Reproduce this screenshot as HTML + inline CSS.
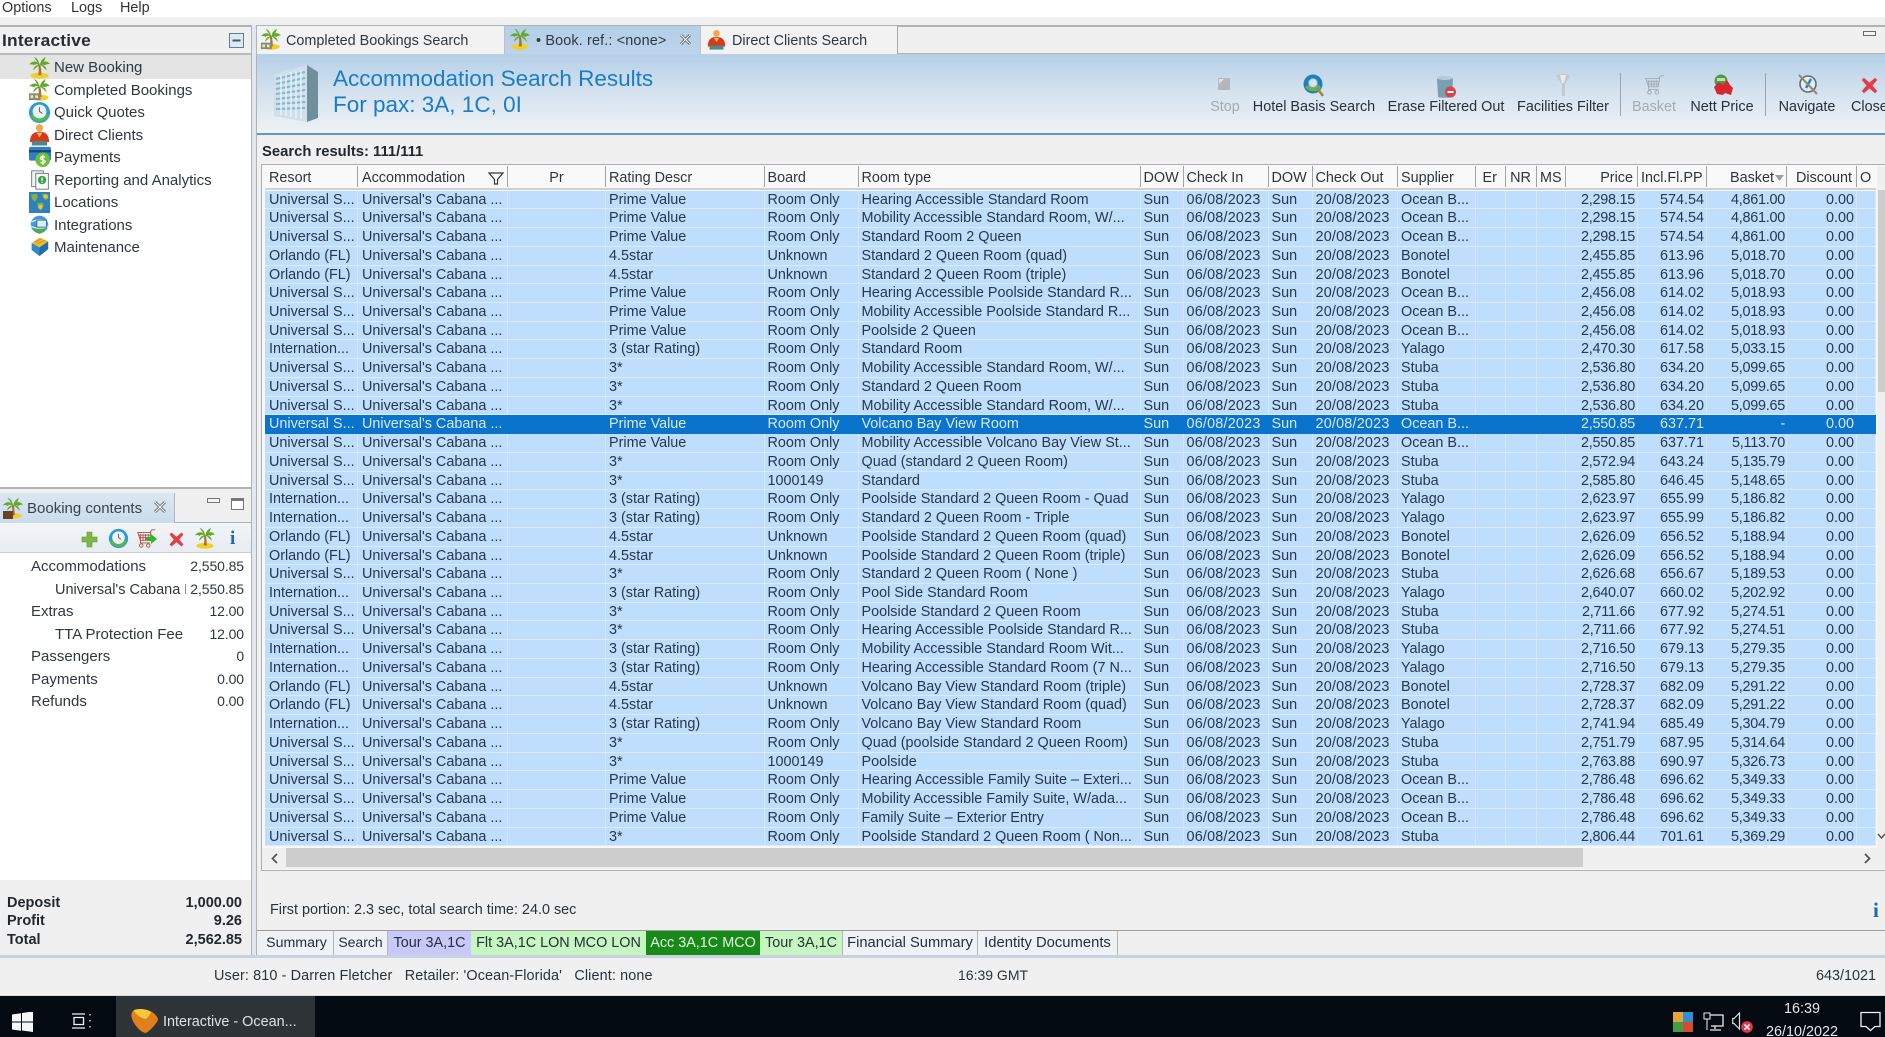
<!DOCTYPE html>
<html lang="en">
<head>
<meta charset="utf-8">
<title>Interactive - Ocean</title>
<style>
*{box-sizing:border-box}
html,body{margin:0;padding:0;width:1885px;height:1037px;overflow:hidden;background:#f0f0f0}
body{font-family:"Liberation Sans",Arial,sans-serif;font-size:14.4px;color:#2a333c}
#app{position:absolute;left:0;top:0;width:1885px;height:1037px;overflow:hidden;filter:blur(.35px)}
.a{position:absolute;white-space:nowrap}
.box{position:absolute}
.ico{position:absolute}
.c{transform:translate(-50%,-50%);line-height:20px}
.v{transform:translateY(calc(-50% + 1px));line-height:20px}
.v0{transform:translateY(-50%);line-height:20px}
.r0{transform:translateY(-50%);line-height:20px;text-align:right}
.nav{font-size:15px;color:#2f3840}
.amt{font-size:14px;color:#2f3840;letter-spacing:-.1px}
.ft{font-weight:bold;font-size:14.500px;color:#23282d}
.grid{position:absolute;left:265px;top:190.6px;width:1611px}
.r,.h{display:grid;grid-template-columns:93px 150px 98px 158.5px 94px 282px 43px 85px 44px 85.5px 77.5px 30.5px 31px 29px 72px 69px 80px 70px 19px}
.r{height:18.74px;line-height:17.7px;background:#bfdefe;border-bottom:1px solid #d9ebfd}
.r i{font-style:normal;padding:1px 4px 0;overflow:hidden;white-space:nowrap;border-right:1px solid #d4e7fc;color:#26384a}
.r i:nth-child(n+4){padding-left:3px}
.r i:nth-child(8),.r i:nth-child(10){letter-spacing:.2px}
.r i:nth-child(n+15),.h i:nth-child(n+15){text-align:right}
.r i:nth-child(n+15){padding-right:2px}
.r i:nth-child(15),.r i:nth-child(17){letter-spacing:-.25px}
.r i:nth-child(17){padding-right:1px}
.r.s{background:#0a73cc;border-bottom-color:#0a73cc}
.r.s i{color:#d6e9fa;border-right-color:#0a73cc}
.h{position:absolute;left:265px;top:166px;width:1611px;height:24px;line-height:25px;background:#f9f9f9;border-bottom:2px solid #d0d0d0}
.h i{font-style:normal;padding:0 4px;white-space:nowrap;overflow:hidden;border-right:1px solid #a3a3a3;color:#2c3640;height:21px}
.h i:nth-child(n+4){padding-left:3px}
.h i.ctr{text-align:center}
.tb{position:absolute;top:931px;height:24px;line-height:24px;text-align:center;border-right:1px solid #b5b5b5;white-space:nowrap;color:#26303a}
.lab{position:absolute;top:107px;transform:translate(-50%,-50%);line-height:20px;white-space:nowrap;color:#27303a}
.dis{color:#a6abb0}
.tab{position:absolute;top:26px;height:28px;line-height:31px;white-space:nowrap;color:#2f3840}
</style>
</head>
<body>
<svg width="0" height="0" style="position:absolute">
<defs>
<symbol id="palm" viewBox="0 0 24 24">
<ellipse cx="12" cy="20.500" rx="9.500" ry="3.200" fill="#f3cf2a"/>
<path d="M10.500 9c1 4 1 8 0 11h3.500c0-4-.4-8-1.200-11z" fill="#a8742e"/>
<path d="M12.500 10C10 5 5 4 1 9c2-.6 4-.4 5 .8C8 8 10 8 12.500 10zM12.500 10c2-5 7-6 10.500-1.500-2-.4-4 0-5 1.300-1.500-1-3.500-1-5.500.2zM12.500 10C11 5 10 2 6 1c2 2 3 5 6.500 9zM12.500 10c0-4 2-7 6-9-1 3-2 6-6 9zM12 9c-3 0-6 2-6.500 6 2-2 4-3.500 6.500-6zM13 9c3 0 6 2 6.500 6-2-2-4-3.500-6.500-6z" fill="#63a82a"/>
</symbol>
<symbol id="cb" viewBox="0 0 24 24">
<use href="#palm"/>
<rect x="1" y="16" width="12" height="7" fill="#8a8a6a"/>
<rect x="2.500" y="18" width="3" height="3" fill="#e6e6d0"/><rect x="7.500" y="18" width="3" height="3" fill="#e6e6d0"/>
</symbol>
<symbol id="clock" viewBox="0 0 24 24">
<circle cx="12" cy="12" r="11" fill="#2a9ad8"/>
<path d="M2 15a11 11 0 0 0 20 0l-4-1a7 7 0 0 1-12 0z" fill="#58b947"/>
<circle cx="12" cy="11" r="7.200" fill="#eef4f6"/>
<path d="M12 6.500V11l3 2" fill="none" stroke="#667" stroke-width="1.200"/>
</symbol>
<symbol id="person" viewBox="0 0 24 24">
<circle cx="12" cy="5" r="3.800" fill="#f0a850"/>
<path d="M2 20c0-7 3-11 10-11s10 4 10 11z" fill="#d9381c"/>
<path d="M9 10l3 5 3-5z" fill="#f3c24a"/>
<rect x="4" y="19" width="16" height="4.500" fill="#4a8a8a"/>
</symbol>
<symbol id="pay" viewBox="0 0 24 24">
<rect x="0" y="1" width="24" height="15" rx="2" fill="#2f7fc4"/>
<rect x="0" y="4.500" width="24" height="2.500" fill="#16497a"/>
<circle cx="15" cy="15" r="8" fill="#6fbf3a"/>
<path d="M17.500 12.500c-2-1.500-5-1-5 .8 0 2.400 5 1.200 5 3.600 0 1.800-3 2.200-5 .7M15 9.500v11" fill="none" stroke="#fff" stroke-width="1.400"/>
</symbol>
<symbol id="rep" viewBox="0 0 24 24">
<rect x="2" y="1" width="14" height="19" fill="#eef2f2" stroke="#607070"/>
<rect x="7" y="4" width="15" height="19" fill="#f7fafa" stroke="#507070"/>
<circle cx="14.500" cy="12" r="5" fill="#3aa04a"/>
<rect x="13.700" y="9" width="1.600" height="4" fill="#fff"/><rect x="13.700" y="14" width="1.600" height="1.400" fill="#fff"/>
</symbol>
<symbol id="loc" viewBox="0 0 24 24">
<rect x="0" y="0" width="24" height="24" fill="#2f80bf"/>
<path d="M2 3l7-1 1 4-3 5-3-2zM15 2l7 1v5l-4 1-2-3zM9 13l6-1 2 3-3 6-3-2z" fill="#86b23c"/>
<circle cx="19" cy="5" r="2.500" fill="#e8c53a"/><circle cx="13" cy="17" r="2.500" fill="#e8c53a"/>
</symbol>
<symbol id="integ" viewBox="0 0 24 24">
<circle cx="12" cy="12" r="10" fill="#3f9ad6"/>
<path d="M3 9c6-3 12-3 18 0M2 14c6 3 14 3 20 0" stroke="#cfe8f7" stroke-width="1.500" fill="none"/>
<rect x="9" y="7" width="11" height="8" fill="#dff0fa" stroke="#2a6a9a"/>
<path d="M4 17l8 6 8-6" fill="#58a83a"/>
</symbol>
<symbol id="maint" viewBox="0 0 24 24">
<path d="M3 8l9-6 10 4-10 7z" fill="#f2b92e"/>
<path d="M3 8v8l9 7v-10z" fill="#2f88c8"/>
<path d="M12 13v10l10-8V6z" fill="#1e6ea8"/>
<path d="M6 7l9-4M9 9l9-4" stroke="#c98e16" stroke-width="1"/>
</symbol>
<symbol id="redx" viewBox="0 0 24 24">
<path d="M5 2l7 6 7-6 3 3-6 7 6 7-3 3-7-6-7 6-3-3 6-7-6-7z" fill="#e23c46" stroke="#c9d2dc" stroke-width=".6"/>
</symbol>
<symbol id="cart" viewBox="0 0 24 24">
<path d="M2 5h15l-1.500 9H5zM5 7v7M8 7v7M11 7v7M14 7v7M3 8h13M4 11h12M16 5l2-3h4" fill="none" stroke="currentColor" stroke-width="1"/>
<path d="M5 14v3h11" fill="none" stroke="currentColor"/>
<circle cx="6" cy="20" r="2" fill="none" stroke="currentColor"/><circle cx="14" cy="20" r="2" fill="none" stroke="currentColor"/>
</symbol>
</defs>
</svg>
<div id="app">

<!-- menu -->
<div class="box" style="left:0;top:0;width:1885px;height:17px;background:#fff"></div>
<div class="a v" style="left:2px;top:7px;color:#333">Options</div>
<div class="a v" style="left:71px;top:7px;color:#333">Logs</div>
<div class="a v" style="left:120px;top:7px;color:#333">Help</div>

<!-- panel frames -->
<div class="box" style="left:0;top:25px;width:1885px;height:2px;background:#b0b3b6"></div>
<div class="box" style="left:251px;top:25px;width:6px;height:933px;background:#e3e8ee;border-left:1px solid #b0b3b6;border-right:1px solid #b0b3b6"></div>

<!-- left top panel -->
<div class="a" style="left:2px;top:41px;font-size:17px;line-height:20px;font-weight:bold;color:#2a2e33;letter-spacing:.2px;transform:translateY(-50%) scaleX(1.02);transform-origin:left">Interactive</div>
<svg class="ico" style="left:229px;top:33px" width="15" height="15"><rect x=".5" y=".5" width="14" height="14" fill="#dfe9f2" stroke="#5d7e9e"/><rect x="3.500" y="6.500" width="8" height="2" fill="#3c5a78"/></svg>
<div class="box" style="left:0;top:53px;width:251px;height:2px;background:#b8babc"></div>
<div class="box" style="left:0;top:55px;width:251px;height:432px;background:#fff"></div>
<div class="box" style="left:0;top:55px;width:251px;height:23.500px;background:#e4e4e4"></div>
<div class="box" style="left:0;top:487px;width:251px;height:6px;background:#f0f0f0;border-top:2px solid #b0b3b6"></div>

<svg class="ico" style="left:28px;top:56px" width="23" height="23"><use href="#palm"/></svg>
<svg class="ico" style="left:28px;top:78px" width="23" height="23"><use href="#cb"/></svg>
<svg class="ico" style="left:28px;top:101px" width="23" height="23"><use href="#clock"/></svg>
<svg class="ico" style="left:28px;top:123px" width="23" height="23"><use href="#person"/></svg>
<svg class="ico" style="left:29px;top:146px" width="22" height="22"><use href="#pay"/></svg>
<svg class="ico" style="left:30px;top:169px" width="20" height="22"><use href="#rep"/></svg>
<svg class="ico" style="left:29px;top:192px" width="21" height="21"><use href="#loc"/></svg>
<svg class="ico" style="left:29px;top:214px" width="21" height="21"><use href="#integ"/></svg>
<svg class="ico" style="left:29px;top:236px" width="21" height="21"><use href="#maint"/></svg>

<div class="a v nav" style="left:54px;top:67px">New Booking</div>
<div class="a v nav" style="left:54px;top:89.500px">Completed Bookings</div>
<div class="a v nav" style="left:54px;top:112px">Quick Quotes</div>
<div class="a v nav" style="left:54px;top:134.500px">Direct Clients</div>
<div class="a v nav" style="left:54px;top:157px">Payments</div>
<div class="a v nav" style="left:54px;top:179.500px">Reporting and Analytics</div>
<div class="a v nav" style="left:54px;top:202px">Locations</div>
<div class="a v nav" style="left:54px;top:224.500px">Integrations</div>
<div class="a v nav" style="left:54px;top:247px">Maintenance</div>

<!-- booking contents -->
<div class="box" style="left:0;top:493px;width:175px;height:30px;background:linear-gradient(#dce7f1,#c9dcee);border-right:1px solid #b0b8c0"></div>
<div class="box" style="left:175px;top:522px;width:76px;height:1px;background:#b0b3b6"></div>
<svg class="ico" style="left:2px;top:497px" width="22" height="22"><use href="#palm"/><rect x="1" y="14" width="10" height="8" fill="#6a4028"/></svg>
<div class="a v nav" style="left:27px;top:508px;color:#39424a">Booking contents</div>
<svg class="ico" style="left:153px;top:500px" width="14" height="14"><path d="M2 2l10 10M12 2L2 12" stroke="#6d7680" stroke-width="3"/><path d="M2 2l10 10M12 2L2 12" stroke="#fff" stroke-width="1"/></svg>
<svg class="ico" style="left:207px;top:497px" width="40" height="16"><rect x=".5" y="1.500" width="12" height="4" fill="#f4f4f4" stroke="#777"/><rect x="24.500" y="1.500" width="12" height="11" fill="#fff" stroke="#777"/><rect x="24" y="1" width="13" height="3" fill="#777"/></svg>

<div class="box" style="left:0;top:523px;width:251px;height:30px;background:linear-gradient(#f3f5f7,#e7ecf1);border-bottom:1px solid #c8ccd0"></div>
<svg class="ico" style="left:81px;top:531px" width="17" height="17"><path d="M6 1h5v5h5v5h-5v5H6v-5H1V6h5z" fill="#7fb648" stroke="#5e9434" stroke-width=".6"/></svg>
<svg class="ico" style="left:108px;top:528px" width="21" height="21"><use href="#clock"/></svg>
<svg class="ico" style="left:136px;top:528px;color:#b04a40" width="21" height="21"><use href="#cart"/><path d="M10 9h5V6l6 5-6 5v-3h-5z" fill="#2fb52f"/></svg>
<svg class="ico" style="left:168px;top:531px" width="17" height="17"><use href="#redx"/></svg>
<svg class="ico" style="left:194px;top:527px" width="22" height="22"><use href="#palm"/></svg>
<div class="a" style="left:230px;top:528px;font:bold 19px/22px 'Liberation Serif',serif;color:#1a6aa6">i</div>

<div class="box" style="left:0;top:553px;width:251px;height:327px;background:#fff"></div>
<div class="a v nav" style="left:31px;top:566px">Accommodations</div>
<div class="a r0 amt" style="right:1641px;top:566px">2,550.85</div>
<div class="a v nav" style="left:55px;top:588.500px;width:131px;overflow:hidden;font-size:14.500px">Universal's Cabana Bay</div>
<div class="a r0 amt" style="right:1641px;top:588.500px">2,550.85</div>
<div class="a v nav" style="left:31px;top:611px">Extras</div>
<div class="a r0 amt" style="right:1641px;top:611px">12.00</div>
<div class="a v nav" style="left:55px;top:633.500px">TTA Protection Fee</div>
<div class="a r0 amt" style="right:1641px;top:633.500px">12.00</div>
<div class="a v nav" style="left:31px;top:656px">Passengers</div>
<div class="a r0 amt" style="right:1641px;top:656px">0</div>
<div class="a v nav" style="left:31px;top:678.500px">Payments</div>
<div class="a r0 amt" style="right:1641px;top:678.500px">0.00</div>
<div class="a v nav" style="left:31px;top:701px">Refunds</div>
<div class="a r0 amt" style="right:1641px;top:701px">0.00</div>

<div class="a v0 ft" style="left:7px;top:903px">Deposit</div>
<div class="a r0 ft" style="right:1643px;top:903px">1,000.00</div>
<div class="a v0 ft" style="left:7px;top:921px">Profit</div>
<div class="a r0 ft" style="right:1643px;top:921px">9.26</div>
<div class="a v0 ft" style="left:7px;top:940px">Total</div>
<div class="a r0 ft" style="right:1643px;top:940px">2,562.85</div>

<!-- main tabs -->
<div class="box" style="left:257px;top:53px;width:1628px;height:1px;background:#aeb1b4"></div>
<div class="tab" style="left:257px;width:248px;padding-left:29px;background:#f2f2f2;border-right:1px solid #c0c0c0">Completed Bookings Search</div>
<div class="tab" style="left:505px;width:195px;padding-left:31px;background:linear-gradient(#b5cfe8,#bcd4ec);height:29px;letter-spacing:.15px">&#8226; Book. ref.: &lt;none&gt;</div>
<div class="tab" style="left:700px;width:198px;padding-left:31px;background:#f2f2f2;border-right:1px solid #a8a8a8;border-left:1px solid #c0c0c0">Direct Clients Search</div>
<svg class="ico" style="left:260px;top:28px" width="22" height="22"><use href="#cb"/></svg>
<svg class="ico" style="left:509px;top:28px" width="22" height="22"><use href="#palm"/></svg>
<svg class="ico" style="left:679px;top:33px" width="13" height="13"><path d="M2 2l9 9M11 2l-9 9" stroke="#66707a" stroke-width="3"/><path d="M2 2l9 9M11 2l-9 9" stroke="#fff" stroke-width="1"/></svg>
<svg class="ico" style="left:706px;top:29px" width="21" height="21"><use href="#person"/></svg>
<svg class="ico" style="left:1863px;top:29px" width="13" height="8"><rect x=".5" y="2.500" width="12" height="4" fill="#f4f4f4" stroke="#6a6a6a"/></svg>

<!-- blue header -->
<div class="box" style="left:257px;top:54px;width:1628px;height:81px;background:linear-gradient(#b5cfe8 0%,#d3e1ee 45%,#eff2f5 100%);border-bottom:2px solid #5e9ac8"></div>
<svg class="ico" style="left:273px;top:65px" width="46" height="57" viewBox="0 0 46 57">
<path d="M1 9L34 0v57L1 51z" fill="#cfe0ea"/>
<path d="M34 0l11 7v46l-11 4z" fill="#6f8f9c"/>
<g stroke="#7fb6d2" stroke-width="2" fill="none">
<path d="M3 14L32 7M3 19l29-6M3 24l29-5M3 29l29-4M3 34l29-3M3 39l29-2M3 44l29-1"/>
<path d="M8 10v40M13 9v42M18 7v45M23 6v47M28 5v49" stroke="#e8f2f6" stroke-width="1.500"/>
</g>
</svg>
<div class="a v" style="left:333px;top:78px;font-size:22.500px;color:#1a7cc7">Accommodation Search Results</div>
<div class="a v" style="left:333px;top:104px;font-size:22.500px;color:#1a7cc7">For pax: 3A, 1C, 0I</div>

<!-- toolbar icons -->
<svg class="ico" style="left:1218px;top:78px" width="12" height="12"><rect width="12" height="12" fill="#b4b8bc"/><path d="M1 1h5L1 6z" fill="#e2e5e8"/></svg>
<svg class="ico" style="left:1303px;top:74px" width="22" height="24" viewBox="0 0 22 24"><circle cx="10" cy="10" r="9.500" fill="#1f7fc2"/><path d="M2 13c3 5 12 6 16 1l-2-3-5 2-3-3z" fill="#6fb14a"/><circle cx="10" cy="9" r="4.500" fill="#cfe6ee" stroke="#86a8b4"/><path d="M14 14l6 8" stroke="#9a8a30" stroke-width="2.500"/></svg>
<svg class="ico" style="left:1436px;top:75px" width="22" height="24" viewBox="0 0 22 24"><path d="M1 3c3-2 13-2 16 0l-1 19c-3 1-11 1-14 0z" fill="#7a9fb2"/><ellipse cx="9" cy="3" rx="8" ry="2" fill="#b4ccd8"/><circle cx="14.500" cy="17" r="5.500" fill="#d8424a"/><rect x="11.500" y="16" width="6" height="2" fill="#fff"/></svg>
<svg class="ico" style="left:1554px;top:73px" width="18" height="25" viewBox="0 0 18 25"><path d="M2 3c3-3 11-3 14 0l-5 8v12H8V11z" fill="#c3c9cd"/><path d="M6 2h6l-2 8H8z" fill="#e8ecee"/></svg>
<div class="box" style="left:1620px;top:73px;width:1px;height:43px;background:#9aa5ae"></div>
<svg class="ico" style="left:1644px;top:73px;color:#a4a9ad" width="22" height="24"><use href="#cart"/></svg>
<svg class="ico" style="left:1710px;top:73px" width="26" height="24" viewBox="0 0 22 24"><circle cx="9" cy="8" r="6.500" fill="#4f9a44"/><path d="M2 14l5-5 4 3 4-5 3 5 3 3-2 7-6-2-2 2-6-1z" fill="#d8252f"/><rect x="5" y="5" width="8" height="3" fill="#bde0a8"/></svg>
<div class="box" style="left:1765px;top:73px;width:1px;height:43px;background:#9aa5ae"></div>
<svg class="ico" style="left:1796px;top:73px" width="24" height="24" viewBox="0 0 24 24"><circle cx="12" cy="11" r="8" fill="#e3ecf1" stroke="#5a6d78" stroke-width="1.600"/><path d="M15 6l-5 9" stroke="#2f80c8" stroke-width="2.500"/><path d="M3 2l18 19" stroke="#8f8a72" stroke-width="2"/></svg>
<svg class="ico" style="left:1860px;top:76px" width="19" height="19"><use href="#redx"/></svg>

<div class="lab dis" style="left:1225px">Stop</div>
<div class="lab" style="left:1314px">Hotel Basis Search</div>
<div class="lab" style="left:1446px">Erase Filtered Out</div>
<div class="lab" style="left:1563px">Facilities Filter</div>
<div class="lab dis" style="left:1654px">Basket</div>
<div class="lab" style="left:1722px">Nett Price</div>
<div class="lab" style="left:1807px">Navigate</div>
<div class="lab" style="left:1851px;transform:translateY(-50%)">Close</div>

<div class="a v0" style="left:262px;top:152px;font-weight:bold;font-size:14.800px;color:#23282d">Search results: 111/111</div>

<!-- table -->
<div class="box" style="left:261px;top:164px;width:1624px;height:707px;background:#f8f8f8;border:1px solid #aeaeae;border-right:0"></div>
<div class="h"><i>Resort</i><i>Accommodation</i><i class="ctr">Pr</i><i>Rating Descr</i><i>Board</i><i>Room type</i><i>DOW</i><i>Check In</i><i>DOW</i><i>Check Out</i><i>Supplier</i><i class="ctr">Er</i><i class="ctr">NR</i><i class="ctr">MS</i><i>Price</i><i>Incl.Fl.PP</i><i style="padding-right:12px">Basket</i><i>Discount</i><i style="text-align:left;border:0">O</i></div>
<svg class="ico" style="left:488px;top:172px" width="16" height="13"><path d="M1 1h14L9.500 7.500V12h-3V7.500z" fill="#fff" stroke="#333" stroke-width="1.200"/></svg>
<svg class="ico" style="left:1775px;top:175px" width="9" height="6"><path d="M0 0h9L4.500 6z" fill="#9aa0a6"/></svg>

<div class="grid">
<div class="r"><i>Universal S...</i><i>Universal's Cabana ...</i><i></i><i>Prime Value</i><i>Room Only</i><i>Hearing Accessible Standard Room</i><i>Sun</i><i>06/08/2023</i><i>Sun</i><i>20/08/2023</i><i>Ocean B...</i><i></i><i></i><i></i><i>2,298.15</i><i>574.54</i><i>4,861.00</i><i>0.00</i><i></i></div>
<div class="r"><i>Universal S...</i><i>Universal's Cabana ...</i><i></i><i>Prime Value</i><i>Room Only</i><i>Mobility Accessible Standard Room, W/...</i><i>Sun</i><i>06/08/2023</i><i>Sun</i><i>20/08/2023</i><i>Ocean B...</i><i></i><i></i><i></i><i>2,298.15</i><i>574.54</i><i>4,861.00</i><i>0.00</i><i></i></div>
<div class="r"><i>Universal S...</i><i>Universal's Cabana ...</i><i></i><i>Prime Value</i><i>Room Only</i><i>Standard Room 2 Queen</i><i>Sun</i><i>06/08/2023</i><i>Sun</i><i>20/08/2023</i><i>Ocean B...</i><i></i><i></i><i></i><i>2,298.15</i><i>574.54</i><i>4,861.00</i><i>0.00</i><i></i></div>
<div class="r"><i>Orlando (FL)</i><i>Universal's Cabana ...</i><i></i><i>4.5star</i><i>Unknown</i><i>Standard 2 Queen Room (quad)</i><i>Sun</i><i>06/08/2023</i><i>Sun</i><i>20/08/2023</i><i>Bonotel</i><i></i><i></i><i></i><i>2,455.85</i><i>613.96</i><i>5,018.70</i><i>0.00</i><i></i></div>
<div class="r"><i>Orlando (FL)</i><i>Universal's Cabana ...</i><i></i><i>4.5star</i><i>Unknown</i><i>Standard 2 Queen Room (triple)</i><i>Sun</i><i>06/08/2023</i><i>Sun</i><i>20/08/2023</i><i>Bonotel</i><i></i><i></i><i></i><i>2,455.85</i><i>613.96</i><i>5,018.70</i><i>0.00</i><i></i></div>
<div class="r"><i>Universal S...</i><i>Universal's Cabana ...</i><i></i><i>Prime Value</i><i>Room Only</i><i>Hearing Accessible Poolside Standard R...</i><i>Sun</i><i>06/08/2023</i><i>Sun</i><i>20/08/2023</i><i>Ocean B...</i><i></i><i></i><i></i><i>2,456.08</i><i>614.02</i><i>5,018.93</i><i>0.00</i><i></i></div>
<div class="r"><i>Universal S...</i><i>Universal's Cabana ...</i><i></i><i>Prime Value</i><i>Room Only</i><i>Mobility Accessible Poolside Standard R...</i><i>Sun</i><i>06/08/2023</i><i>Sun</i><i>20/08/2023</i><i>Ocean B...</i><i></i><i></i><i></i><i>2,456.08</i><i>614.02</i><i>5,018.93</i><i>0.00</i><i></i></div>
<div class="r"><i>Universal S...</i><i>Universal's Cabana ...</i><i></i><i>Prime Value</i><i>Room Only</i><i>Poolside 2 Queen</i><i>Sun</i><i>06/08/2023</i><i>Sun</i><i>20/08/2023</i><i>Ocean B...</i><i></i><i></i><i></i><i>2,456.08</i><i>614.02</i><i>5,018.93</i><i>0.00</i><i></i></div>
<div class="r"><i>Internation...</i><i>Universal's Cabana ...</i><i></i><i>3 (star Rating)</i><i>Room Only</i><i>Standard Room</i><i>Sun</i><i>06/08/2023</i><i>Sun</i><i>20/08/2023</i><i>Yalago</i><i></i><i></i><i></i><i>2,470.30</i><i>617.58</i><i>5,033.15</i><i>0.00</i><i></i></div>
<div class="r"><i>Universal S...</i><i>Universal's Cabana ...</i><i></i><i>3*</i><i>Room Only</i><i>Mobility Accessible Standard Room, W/...</i><i>Sun</i><i>06/08/2023</i><i>Sun</i><i>20/08/2023</i><i>Stuba</i><i></i><i></i><i></i><i>2,536.80</i><i>634.20</i><i>5,099.65</i><i>0.00</i><i></i></div>
<div class="r"><i>Universal S...</i><i>Universal's Cabana ...</i><i></i><i>3*</i><i>Room Only</i><i>Standard 2 Queen Room</i><i>Sun</i><i>06/08/2023</i><i>Sun</i><i>20/08/2023</i><i>Stuba</i><i></i><i></i><i></i><i>2,536.80</i><i>634.20</i><i>5,099.65</i><i>0.00</i><i></i></div>
<div class="r"><i>Universal S...</i><i>Universal's Cabana ...</i><i></i><i>3*</i><i>Room Only</i><i>Mobility Accessible Standard Room, W/...</i><i>Sun</i><i>06/08/2023</i><i>Sun</i><i>20/08/2023</i><i>Stuba</i><i></i><i></i><i></i><i>2,536.80</i><i>634.20</i><i>5,099.65</i><i>0.00</i><i></i></div>
<div class="r s"><i>Universal S...</i><i>Universal's Cabana ...</i><i></i><i>Prime Value</i><i>Room Only</i><i>Volcano Bay View Room</i><i>Sun</i><i>06/08/2023</i><i>Sun</i><i>20/08/2023</i><i>Ocean B...</i><i></i><i></i><i></i><i>2,550.85</i><i>637.71</i><i>-</i><i>0.00</i><i></i></div>
<div class="r"><i>Universal S...</i><i>Universal's Cabana ...</i><i></i><i>Prime Value</i><i>Room Only</i><i>Mobility Accessible Volcano Bay View St...</i><i>Sun</i><i>06/08/2023</i><i>Sun</i><i>20/08/2023</i><i>Ocean B...</i><i></i><i></i><i></i><i>2,550.85</i><i>637.71</i><i>5,113.70</i><i>0.00</i><i></i></div>
<div class="r"><i>Universal S...</i><i>Universal's Cabana ...</i><i></i><i>3*</i><i>Room Only</i><i>Quad (standard 2 Queen Room)</i><i>Sun</i><i>06/08/2023</i><i>Sun</i><i>20/08/2023</i><i>Stuba</i><i></i><i></i><i></i><i>2,572.94</i><i>643.24</i><i>5,135.79</i><i>0.00</i><i></i></div>
<div class="r"><i>Universal S...</i><i>Universal's Cabana ...</i><i></i><i>3*</i><i>1000149</i><i>Standard</i><i>Sun</i><i>06/08/2023</i><i>Sun</i><i>20/08/2023</i><i>Stuba</i><i></i><i></i><i></i><i>2,585.80</i><i>646.45</i><i>5,148.65</i><i>0.00</i><i></i></div>
<div class="r"><i>Internation...</i><i>Universal's Cabana ...</i><i></i><i>3 (star Rating)</i><i>Room Only</i><i>Poolside Standard 2 Queen Room - Quad</i><i>Sun</i><i>06/08/2023</i><i>Sun</i><i>20/08/2023</i><i>Yalago</i><i></i><i></i><i></i><i>2,623.97</i><i>655.99</i><i>5,186.82</i><i>0.00</i><i></i></div>
<div class="r"><i>Internation...</i><i>Universal's Cabana ...</i><i></i><i>3 (star Rating)</i><i>Room Only</i><i>Standard 2 Queen Room - Triple</i><i>Sun</i><i>06/08/2023</i><i>Sun</i><i>20/08/2023</i><i>Yalago</i><i></i><i></i><i></i><i>2,623.97</i><i>655.99</i><i>5,186.82</i><i>0.00</i><i></i></div>
<div class="r"><i>Orlando (FL)</i><i>Universal's Cabana ...</i><i></i><i>4.5star</i><i>Unknown</i><i>Poolside Standard 2 Queen Room (quad)</i><i>Sun</i><i>06/08/2023</i><i>Sun</i><i>20/08/2023</i><i>Bonotel</i><i></i><i></i><i></i><i>2,626.09</i><i>656.52</i><i>5,188.94</i><i>0.00</i><i></i></div>
<div class="r"><i>Orlando (FL)</i><i>Universal's Cabana ...</i><i></i><i>4.5star</i><i>Unknown</i><i>Poolside Standard 2 Queen Room (triple)</i><i>Sun</i><i>06/08/2023</i><i>Sun</i><i>20/08/2023</i><i>Bonotel</i><i></i><i></i><i></i><i>2,626.09</i><i>656.52</i><i>5,188.94</i><i>0.00</i><i></i></div>
<div class="r"><i>Universal S...</i><i>Universal's Cabana ...</i><i></i><i>3*</i><i>Room Only</i><i>Standard 2 Queen Room ( None )</i><i>Sun</i><i>06/08/2023</i><i>Sun</i><i>20/08/2023</i><i>Stuba</i><i></i><i></i><i></i><i>2,626.68</i><i>656.67</i><i>5,189.53</i><i>0.00</i><i></i></div>
<div class="r"><i>Internation...</i><i>Universal's Cabana ...</i><i></i><i>3 (star Rating)</i><i>Room Only</i><i>Pool Side Standard Room</i><i>Sun</i><i>06/08/2023</i><i>Sun</i><i>20/08/2023</i><i>Yalago</i><i></i><i></i><i></i><i>2,640.07</i><i>660.02</i><i>5,202.92</i><i>0.00</i><i></i></div>
<div class="r"><i>Universal S...</i><i>Universal's Cabana ...</i><i></i><i>3*</i><i>Room Only</i><i>Poolside Standard 2 Queen Room</i><i>Sun</i><i>06/08/2023</i><i>Sun</i><i>20/08/2023</i><i>Stuba</i><i></i><i></i><i></i><i>2,711.66</i><i>677.92</i><i>5,274.51</i><i>0.00</i><i></i></div>
<div class="r"><i>Universal S...</i><i>Universal's Cabana ...</i><i></i><i>3*</i><i>Room Only</i><i>Hearing Accessible Poolside Standard R...</i><i>Sun</i><i>06/08/2023</i><i>Sun</i><i>20/08/2023</i><i>Stuba</i><i></i><i></i><i></i><i>2,711.66</i><i>677.92</i><i>5,274.51</i><i>0.00</i><i></i></div>
<div class="r"><i>Internation...</i><i>Universal's Cabana ...</i><i></i><i>3 (star Rating)</i><i>Room Only</i><i>Mobility Accessible Standard Room Wit...</i><i>Sun</i><i>06/08/2023</i><i>Sun</i><i>20/08/2023</i><i>Yalago</i><i></i><i></i><i></i><i>2,716.50</i><i>679.13</i><i>5,279.35</i><i>0.00</i><i></i></div>
<div class="r"><i>Internation...</i><i>Universal's Cabana ...</i><i></i><i>3 (star Rating)</i><i>Room Only</i><i>Hearing Accessible Standard Room (7 N...</i><i>Sun</i><i>06/08/2023</i><i>Sun</i><i>20/08/2023</i><i>Yalago</i><i></i><i></i><i></i><i>2,716.50</i><i>679.13</i><i>5,279.35</i><i>0.00</i><i></i></div>
<div class="r"><i>Orlando (FL)</i><i>Universal's Cabana ...</i><i></i><i>4.5star</i><i>Unknown</i><i>Volcano Bay View Standard Room (triple)</i><i>Sun</i><i>06/08/2023</i><i>Sun</i><i>20/08/2023</i><i>Bonotel</i><i></i><i></i><i></i><i>2,728.37</i><i>682.09</i><i>5,291.22</i><i>0.00</i><i></i></div>
<div class="r"><i>Orlando (FL)</i><i>Universal's Cabana ...</i><i></i><i>4.5star</i><i>Unknown</i><i>Volcano Bay View Standard Room (quad)</i><i>Sun</i><i>06/08/2023</i><i>Sun</i><i>20/08/2023</i><i>Bonotel</i><i></i><i></i><i></i><i>2,728.37</i><i>682.09</i><i>5,291.22</i><i>0.00</i><i></i></div>
<div class="r"><i>Internation...</i><i>Universal's Cabana ...</i><i></i><i>3 (star Rating)</i><i>Room Only</i><i>Volcano Bay View Standard Room</i><i>Sun</i><i>06/08/2023</i><i>Sun</i><i>20/08/2023</i><i>Yalago</i><i></i><i></i><i></i><i>2,741.94</i><i>685.49</i><i>5,304.79</i><i>0.00</i><i></i></div>
<div class="r"><i>Universal S...</i><i>Universal's Cabana ...</i><i></i><i>3*</i><i>Room Only</i><i>Quad (poolside Standard 2 Queen Room)</i><i>Sun</i><i>06/08/2023</i><i>Sun</i><i>20/08/2023</i><i>Stuba</i><i></i><i></i><i></i><i>2,751.79</i><i>687.95</i><i>5,314.64</i><i>0.00</i><i></i></div>
<div class="r"><i>Universal S...</i><i>Universal's Cabana ...</i><i></i><i>3*</i><i>1000149</i><i>Poolside</i><i>Sun</i><i>06/08/2023</i><i>Sun</i><i>20/08/2023</i><i>Stuba</i><i></i><i></i><i></i><i>2,763.88</i><i>690.97</i><i>5,326.73</i><i>0.00</i><i></i></div>
<div class="r"><i>Universal S...</i><i>Universal's Cabana ...</i><i></i><i>Prime Value</i><i>Room Only</i><i>Hearing Accessible Family Suite – Exteri...</i><i>Sun</i><i>06/08/2023</i><i>Sun</i><i>20/08/2023</i><i>Ocean B...</i><i></i><i></i><i></i><i>2,786.48</i><i>696.62</i><i>5,349.33</i><i>0.00</i><i></i></div>
<div class="r"><i>Universal S...</i><i>Universal's Cabana ...</i><i></i><i>Prime Value</i><i>Room Only</i><i>Mobility Accessible Family Suite, W/ada...</i><i>Sun</i><i>06/08/2023</i><i>Sun</i><i>20/08/2023</i><i>Ocean B...</i><i></i><i></i><i></i><i>2,786.48</i><i>696.62</i><i>5,349.33</i><i>0.00</i><i></i></div>
<div class="r"><i>Universal S...</i><i>Universal's Cabana ...</i><i></i><i>Prime Value</i><i>Room Only</i><i>Family Suite – Exterior Entry</i><i>Sun</i><i>06/08/2023</i><i>Sun</i><i>20/08/2023</i><i>Ocean B...</i><i></i><i></i><i></i><i>2,786.48</i><i>696.62</i><i>5,349.33</i><i>0.00</i><i></i></div>
<div class="r"><i>Universal S...</i><i>Universal's Cabana ...</i><i></i><i>3*</i><i>Room Only</i><i>Poolside Standard 2 Queen Room ( Non...</i><i>Sun</i><i>06/08/2023</i><i>Sun</i><i>20/08/2023</i><i>Stuba</i><i></i><i></i><i></i><i>2,806.44</i><i>701.61</i><i>5,369.29</i><i>0.00</i><i></i></div>
</div>

<!-- scrollbars -->
<div class="box" style="left:1877px;top:166px;width:8px;height:682px;background:#f0f0f0"></div>
<div class="box" style="left:1878px;top:190px;width:7px;height:202px;background:#cdcdcd"></div>
<svg class="ico" style="left:1877px;top:832px" width="8" height="8"><path d="M1 2l3.500 4L8 2" fill="none" stroke="#555" stroke-width="1.500"/></svg>
<div class="box" style="left:262px;top:848px;width:1623px;height:21px;background:#f0f0f0"></div>
<div class="box" style="left:286px;top:848px;width:1297px;height:19px;background:#cdcdcd"></div>
<svg class="ico" style="left:270px;top:853px" width="10" height="11"><path d="M7 1L2.500 5.500 7 10" fill="none" stroke="#555" stroke-width="1.800"/></svg>
<svg class="ico" style="left:1862px;top:853px" width="10" height="11"><path d="M3 1l4.500 4.500L3 10" fill="none" stroke="#555" stroke-width="1.800"/></svg>

<div class="a v0" style="left:270px;top:910px;color:#2a333c">First portion: 2.3 sec, total search time: 24.0 sec</div>
<div class="a" style="left:1873px;top:898px;font:bold 21px/24px 'Liberation Serif',serif;color:#1a6aa6">i</div>

<!-- bottom tabs -->
<div class="box" style="left:257px;top:930px;width:1628px;height:1px;background:#9c9c9c"></div>
<div class="box" style="left:257px;top:931px;width:1628px;height:24px;background:#f0f0f0"></div>
<div class="tb" style="left:260px;width:74px;background:#eef1f5;font-size:14.200px">Summary</div>
<div class="tb" style="left:334px;width:54px;background:#eef1f5;font-size:14px;line-height:23px">Search</div>
<div class="tb" style="left:388px;width:83px;background:#c8c8fa;border-right:0">Tour 3A,1C</div>
<div class="tb" style="left:471px;width:175px;background:#c6f7c0;border-right:0">Flt 3A,1C LON MCO LON</div>
<div class="tb" style="left:646px;width:114px;background:#178a17;color:#e6f5e6;border-right:0">Acc 3A,1C MCO</div>
<div class="tb" style="left:760px;width:83px;background:#c6f7c0">Tour 3A,1C</div>
<div class="tb" style="left:843px;width:135px;background:#eef1f5;font-size:14.700px">Financial Summary</div>
<div class="tb" style="left:978px;width:140px;background:#eef1f5;font-size:14.800px">Identity Documents</div>
<div class="box" style="left:0;top:955px;width:1885px;height:3px;background:#c6d2e0"></div>

<!-- status -->
<div class="box" style="left:0;top:958px;width:1885px;height:37px;background:#f0f0f0"></div>
<div class="a v" style="left:214px;top:975px;letter-spacing:.12px">User: 810 - Darren Fletcher&nbsp;&nbsp; Retailer: 'Ocean-Florida'&nbsp;&nbsp; Client: none</div>
<div class="a v" style="left:958px;top:974px;font-size:14px">16:39 GMT</div>
<div class="a v" style="left:1816px;top:975px">643/1021</div>

<!-- taskbar -->
<div class="box" style="left:0;top:995px;width:1885px;height:42px;background:#040a12;border-top:1px solid #d8d8d8"></div>
<div class="box" style="left:116px;top:996px;width:199px;height:41px;background:#2e3338"></div>
<svg class="ico" style="left:12px;top:1012px" width="21" height="20"><path d="M0 2.500l9-1.300v8.300H0zM10 1l11-1.600V9.500H10zM0 10.500h9v8.300l-9-1.300zM10 10.500h11V20l-11-1.500z" fill="#f4f6f8"/></svg>
<svg class="ico" style="left:71px;top:1011px" width="21" height="21"><path d="M1 3h13M1 17h13M3 6.500h9.500v7H3zM19 3v1.500M19 9v1.500M19 15v1.500" fill="none" stroke="#f0f0f0" stroke-width="1.300"/></svg>
<svg class="ico" style="left:129px;top:1008px" width="30" height="26" viewBox="0 0 30 26"><path d="M5 2c6-2 13-1 18 2 3 2 6 5 6 8-2 4-7 10-12 13-4 0-9-5-12-10C2 10 1 5 5 2z" fill="#e0801a"/><path d="M5 2c6-2 12-1 17 2-1 3-3 5-5 7C12 10 6 7 5 2z" fill="#f5c83a"/></svg>
<div class="a v" style="left:163px;top:1021px;color:#dfe2e5">Interactive - Ocean...</div>

<svg class="ico" style="left:1673px;top:1012px" width="20" height="20"><rect width="10" height="10" fill="#e8a33a"/><rect x="10" width="10" height="10" fill="#2f8fd0"/><rect y="10" width="10" height="10" fill="#3f9e46"/><rect x="10" y="10" width="10" height="10" fill="#d84a30"/></svg>
<svg class="ico" style="left:1703px;top:1012px" width="22" height="20"><path d="M5 3h15v11H8M5 3v3M12 14v3M7 18h11" fill="none" stroke="#eee" stroke-width="1.300"/><rect x="1" y="1" width="6" height="6" fill="#040a12" stroke="#eee"/><path d="M4 7v11" stroke="#eee"/></svg>
<svg class="ico" style="left:1732px;top:1012px" width="24" height="22"><path d="M7.500 1L2 6.500H.7v5H2l5.500 5.500z" fill="none" stroke="#ddd" stroke-width="1.200"/><circle cx="15" cy="15" r="5.800" fill="#e2374a"/><path d="M12.500 12.500l5 5M17.500 12.500l-5 5" stroke="#fff" stroke-width="1.500"/></svg>
<div class="a c" style="left:1802px;top:1009px;color:#e4e6e8">16:39</div>
<div class="a c" style="left:1802px;top:1032px;color:#e4e6e8">26/10/2022</div>
<svg class="ico" style="left:1860px;top:1011px" width="21" height="21"><path d="M1 1.500h19v14h-5l-4.500 4-4.500-4H1z" fill="none" stroke="#f0f0f0" stroke-width="1.300"/></svg>

</div>
</body>
</html>
